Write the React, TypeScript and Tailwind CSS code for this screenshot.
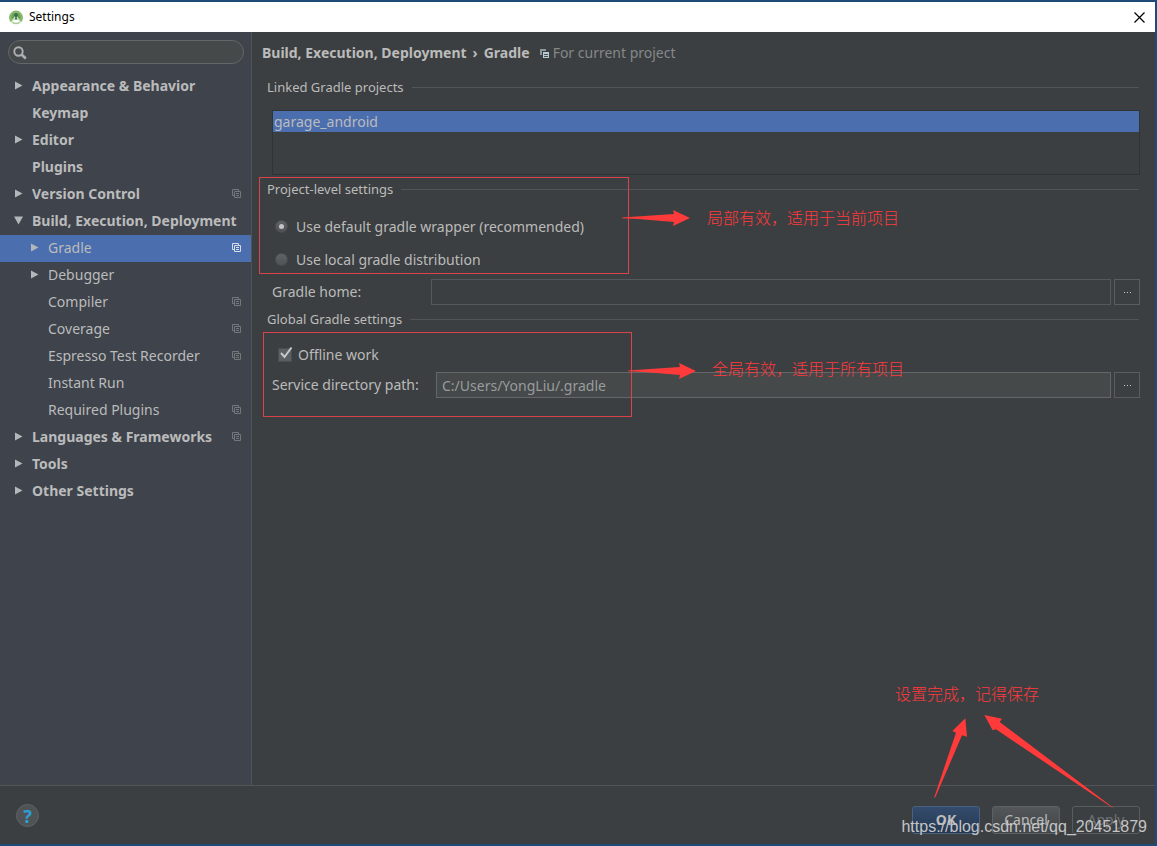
import React from 'react';

type TreeItem = {
  label: string;
  level: 0 | 1;
  arrow?: 'right' | 'down';
  perProject?: boolean;
  selected?: boolean;
};

const tree: TreeItem[] = [
  { label: 'Appearance & Behavior', level: 0, arrow: 'right' },
  { label: 'Keymap', level: 0 },
  { label: 'Editor', level: 0, arrow: 'right' },
  { label: 'Plugins', level: 0 },
  { label: 'Version Control', level: 0, arrow: 'right', perProject: true },
  { label: 'Build, Execution, Deployment', level: 0, arrow: 'down' },
  { label: 'Gradle', level: 1, arrow: 'right', perProject: true, selected: true },
  { label: 'Debugger', level: 1, arrow: 'right' },
  { label: 'Compiler', level: 1, perProject: true },
  { label: 'Coverage', level: 1, perProject: true },
  { label: 'Espresso Test Recorder', level: 1, perProject: true },
  { label: 'Instant Run', level: 1 },
  { label: 'Required Plugins', level: 1, perProject: true },
  { label: 'Languages & Frameworks', level: 0, arrow: 'right', perProject: true },
  { label: 'Tools', level: 0, arrow: 'right' },
  { label: 'Other Settings', level: 0, arrow: 'right' },
];

const StudioLogo = () => (
  <svg width="16" height="16" viewBox="0 0 16 16" aria-hidden="true">
    <path d="M3 13.5 A7 7 0 1 1 13 13.5 L10.5 10 L5.5 10 Z" fill="#86b96a" />
    <path d="M3.5 8.5 A4.5 4.5 0 0 1 12.5 8.5 L11 10.5 L5 10.5 Z" fill="#6a9f57" />
    <path d="M8 6.5 L3.5 14 M8 6.5 L12.5 14" stroke="#dcead4" strokeWidth="1.4" />
    <circle cx="8" cy="6" r="2" fill="#3f7050" />
    <path d="M8 7 V10.5" stroke="#3f7050" strokeWidth="1.5" />
    <path d="M4.5 13.5 Q8 15.5 11.5 13.5" stroke="#a9cf97" strokeWidth="1.5" fill="none" />
  </svg>
);

const SearchIcon = ({ className }: { className: string }) => (
  <svg width="14" height="14" viewBox="0 0 14 14" fill="none" stroke="#aeb1b3" className={className} aria-hidden="true">
    <circle cx="5.5" cy="5.5" r="4.2" strokeWidth="1.9" />
    <path d="M8.5 8.5 L12.8 12.5" strokeWidth="2.6" />
  </svg>
);

const Triangle = ({ dir }: { dir: 'right' | 'down' }) => (
  <svg width="9" height="9" viewBox="0 0 9 9" fill="#b4b7b9" aria-hidden="true">
    {dir === 'right' ? <path d="M1 0.5 L8.5 4.5 L1 8.5 Z" /> : <path d="M0 0.5 L9 0.5 L4.5 8.5 Z" />}
  </svg>
);

const CopyIcon = ({ className }: { className?: string }) => (
  <svg width="9" height="9" viewBox="0 0 9 9" fill="none" stroke="currentColor" className={className} aria-hidden="true">
    <path d="M2 6.5 H0.5 V0.5 H6.5 V2" />
    <path d="M2.5 2.5 H8.5 V8.5 H2.5 Z M4 4.5 H7 M4 6.5 H7" />
  </svg>
);

// Filled variant used beside the breadcrumb
const ProjectIcon = () => (
  <svg width="9" height="9" viewBox="0 0 9 9" aria-hidden="true">
    <path d="M0 0 H6 V2 H2 V6 H0 Z" fill="#8d989d" />
    <path d="M3 3 H9 V9 H3 Z" fill="#b9cbd2" />
    <path d="M4 5.5 H8 M4 7.5 H8" stroke="#4a5154" />
  </svg>
);

const SectionTitle = ({ children }: { children: React.ReactNode }) => (
  <div className="flex h-[26px] items-center gap-2 pl-[5px] pr-px text-[13px]">
    <h2>{children}</h2>
    <div className="h-px flex-1 bg-[#515556]" />
  </div>
);

const Arrow = ({ className }: { className: string }) => (
  <svg width="70" height="16" viewBox="0 0 70 16" fill="#ff3a3a" className={className} aria-hidden="true">
    <path d="M0 7.5 L52 4 L51 0 L68 8 L51 16 L52 12 L16 9 L0 8.3 Z" />
  </svg>
);

const Note = ({ className, children }: { className: string; children: React.ReactNode }) => (
  <p className={`absolute whitespace-nowrap font-['Noto_Sans_CJK_SC',sans-serif] text-base leading-6 font-light text-[#ff3a3e] ${className}`}>
    {children}
  </p>
);

const BrowseButton = ({ label }: { label: string }) => (
  <button aria-label={label} className="ml-[3px] flex h-[26px] w-[26px] items-center justify-center border border-[#5a5d5e] text-[#c8c8c8]">
    <svg width="7" height="1" viewBox="0 0 7 1" fill="currentColor" aria-hidden="true">
      <path d="M0 0h1v1H0z M3 0h1v1H3z M6 0h1v1H6z" />
    </svg>
  </button>
);

const radioClass =
  "grid size-[13px] appearance-none place-items-center rounded-full border border-[#4b4e50] bg-linear-to-b from-[#606365] to-[#505355] checked:before:size-[5px] checked:before:rounded-full checked:before:bg-[#c4c4c4] checked:before:content-['']";

export default function App() {
  return (
    <div className="flex min-h-screen flex-col border-t-2 border-r-2 border-b-2 border-[#1d4a78] bg-[#3c3f41] font-['Noto_Sans','Open_Sans',sans-serif] text-sm text-[#bbbbbb]">
      <header className="flex h-[30px] items-center bg-white pl-2 pr-[10px] text-black">
        <StudioLogo />
        <h1 className="ml-[5px] flex-1 text-xs">Settings</h1>
        <button aria-label="Close">
          <svg width="11" height="11" viewBox="0 0 11 11" stroke="#000" strokeWidth="1.2" aria-hidden="true">
            <path d="M0.5 0.5 L10.5 10.5 M10.5 0.5 L0.5 10.5" />
          </svg>
        </button>
      </header>

      <div className="flex flex-1">
        {/* Settings tree */}
        <aside className="w-[252px] shrink-0 border-r border-[#515456] bg-[#3e434c] pt-2">
          <div className="relative ml-2 mr-[7px]">
            <SearchIcon className="absolute top-[6px] left-[5px]" />
            <input
              type="search"
              aria-label="Search settings"
              className="block h-6 w-full rounded-full border border-[#646668] bg-[#45494a] pl-6 pr-3 outline-none"
            />
          </div>
          <ul className="mt-[9px]">
            {tree.map((item) => (
              <li key={item.label}>
                <button
                  className={`flex h-[27px] w-full items-center pr-[10px] pb-[2px] text-left ${item.level ? 'pl-[30px]' : 'pl-[14px] font-bold'} ${item.selected ? 'bg-[#4b6eaf]' : ''}`}
                >
                  <span className="w-[18px] shrink-0">{item.arrow && <Triangle dir={item.arrow} />}</span>
                  <span className="flex-1 whitespace-nowrap">{item.label}</span>
                  {item.perProject && <CopyIcon className={item.selected ? 'text-[#d5dcea]' : 'text-[#74777b]'} />}
                </button>
              </li>
            ))}
          </ul>
        </aside>

        {/* Gradle page */}
        <main className="min-w-0 flex-1 pl-[10px] pr-[15px]">
          <div className="flex h-[42px] items-center whitespace-nowrap">
            <div className="flex gap-[6px] font-bold">
              <span>Build, Execution, Deployment</span>
              <span>›</span>
              <span>Gradle</span>
            </div>
            <span className="mr-1 ml-[10px]">
              <ProjectIcon />
            </span>
            <span className="text-[#85888a]">For current project</span>
          </div>

          <section>
            <SectionTitle>Linked Gradle projects</SectionTitle>
            <ul className="mt-[10px] ml-[10px] h-[65px] border border-[#313335]">
              <li className="h-[21px] bg-[#4b6eaf] pl-px leading-[21px]">garage_android</li>
            </ul>
          </section>

          <section className="relative mt-px">
            <SectionTitle>Project-level settings</SectionTitle>
            <div className="mt-2 pl-[13px]">
              <label className="flex h-[33px] items-center gap-2">
                <input type="radio" name="distribution" defaultChecked className={radioClass} />
                Use default gradle wrapper (recommended)
              </label>
              <label className="flex h-[33px] items-center gap-2">
                <input type="radio" name="distribution" className={radioClass} />
                Use local gradle distribution
              </label>
            </div>
            <div className="mt-[3px] flex items-center pl-[10px]">
              <label htmlFor="gradle-home" className="w-[159px] shrink-0">Gradle home:</label>
              <input id="gradle-home" className="h-[26px] min-w-0 flex-1 border border-[#56595b] bg-transparent px-[5px] outline-none" />
              <BrowseButton label="Browse Gradle home" />
            </div>

            <div className="pointer-events-none absolute top-px left-[-3px] h-[97px] w-[370px] border border-[#d9434a]" />
            <Arrow className="absolute top-[34px] left-[360px]" />
            <Note className="top-[29px] left-[445px]">局部有效，适用于当前项目</Note>
          </section>

          <section className="relative mt-px">
            <SectionTitle>Global Gradle settings</SectionTitle>
            <div className="mt-2 pl-4">
              <label className="flex h-[30px] w-fit items-center gap-[6px]">
                <span className="relative">
                  <input type="checkbox" defaultChecked className="peer block size-[14px] appearance-none border border-[#4b4e50] bg-[#5c5f61]" />
                  <svg width="16" height="16" viewBox="0 0 16 16" fill="none" className="absolute top-[-2px] left-0 hidden peer-checked:block" aria-hidden="true">
                    <path d="M3 7 L6.5 11 L13.5 1.5" stroke="#c6c9ca" strokeWidth="2" />
                  </svg>
                </span>
                Offline work
              </label>
            </div>
            <div className="mt-[2px] flex items-center pl-[10px]">
              <label htmlFor="service-path" className="w-[164px] shrink-0">Service directory path:</label>
              <input
                id="service-path"
                defaultValue="C:/Users/YongLiu/.gradle"
                className="h-[26px] min-w-0 flex-1 border border-[#646667] bg-[#45494a] px-[5px] text-[#999c9d] outline-none"
              />
              <BrowseButton label="Browse service directory" />
            </div>

            <div className="pointer-events-none absolute top-[26px] left-px h-[85px] w-[369px] border border-[#d9434a]" />
            <Arrow className="absolute top-[57px] left-[366px]" />
            <Note className="top-[50px] left-[450px]">全局有效，适用于所有项目</Note>
          </section>
        </main>
      </div>

      <footer className="relative flex h-[59px] items-start border-t border-[#515556] pt-5 pl-4 pr-[15px]">
        <button aria-label="Help" className="mt-[-2px] size-[23px] rounded-full border border-[#606366] bg-[#505356] text-lg leading-5 font-bold text-[#2ba0d8]">
          ?
        </button>
        <div className="ml-auto flex gap-3">
          <button className="h-7 w-[68px] rounded-[3px] border border-[#48617f] bg-linear-to-b from-[#344c6e] to-[#263850] font-bold">OK</button>
          <button className="h-7 w-[68px] rounded-[3px] border border-[#5e6162] bg-linear-to-b from-[#53575a] to-[#424547]">Cancel</button>
          <button disabled className="h-7 w-[68px] rounded-[3px] border border-[#5a5d5e] text-[#6f7274]">Apply</button>
        </div>

        <Note className="right-[116px] bottom-[139px]">设置完成，记得保存</Note>
        <svg width="195" height="100" viewBox="0 0 585 300" fill="#ff3a3a" className="pointer-events-none absolute right-[35px] bottom-[34px]" aria-hidden="true">
          <path d="M27 264 L93 68 L82 63 L121 25 L126 80 L111 76 L31 262 Z" />
          <path d="M178 15 L231 26 L224 36 L565 293 L560 292 L213 58 L203 61 Z" />
        </svg>
        <p className="pointer-events-none absolute right-2 bottom-[5px] font-['Liberation_Sans',sans-serif] text-base leading-6 text-[#c4c5c6]">
          https://blog.csdn.net/qq_20451879
        </p>
      </footer>
    </div>
  );
}
